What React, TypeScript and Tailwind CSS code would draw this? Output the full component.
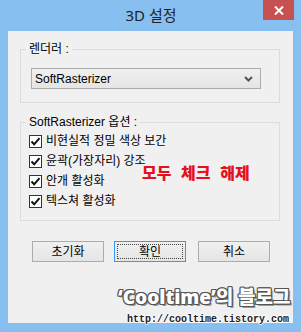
import React from 'react';

const ui = "font-['Liberation_Sans','Noto_Sans_CJK_KR',sans-serif] text-[12px] text-black";

const Check: React.FC<{ label: string }> = ({ label }) => (
  <div className="flex items-center h-[20px]">
    <span className="w-[13px] h-[13px] border border-[#333333] bg-white flex items-center justify-center">
      <svg width="11" height="11" viewBox="0 0 11 11">
        <path d="M1.5 5.5 L4.2 8.3 L9.5 2.2" fill="none" stroke="#111" strokeWidth="2" />
      </svg>
    </span>
    <span className="ml-[4px] leading-none">{label}</span>
  </div>
);

const Btn: React.FC<{ label: string; active?: boolean; className?: string }> = ({ label, active, className }) => (
  <button
    className={`w-[72px] h-[21px] border bg-gradient-to-b from-[#f0f0f0] to-[#e5e5e5] flex items-center justify-center p-[2px] ${
      active ? 'border-[#3399ff]' : 'border-[#acacac]'
    } ${className ?? ''}`}
  >
    <span
      className={`w-full h-full flex items-center justify-center leading-none ${
        active ? 'border border-dotted border-[#444]' : ''
      }`}
    >
      {label}
    </span>
  </button>
);

export default function App() {
  return (
    <div className="relative w-[301px] h-[332px] bg-[#88bff1] overflow-hidden">
      {/* title bar */}
      <div className="relative h-[31px] flex items-center justify-center">
        <span className="text-[15px] text-[#222] font-['Noto_Sans','Noto_Sans_CJK_KR',sans-serif] leading-none pb-[1px] ml-[1px]">
          3D 설정
        </span>
        <div className="absolute right-[7px] top-0 w-[31px] h-[20px] bg-[#c75050] flex items-center justify-center">
          <svg width="10" height="9" viewBox="0 0 10 9">
            <path d="M1 0.5 L9 8.5 M9 0.5 L1 8.5" stroke="#fff" strokeWidth="2" />
          </svg>
        </div>
      </div>

      {/* client */}
      <div className={`mx-[8px] h-[292px] bg-[#f0f0f0] pt-[10px] ${ui}`}>
        <fieldset className="ml-[12px] w-[260px] border border-[#dcdcdc] pl-[5px] pb-[13px]">
          <legend className="px-[3px] leading-[16px]">렌더러 :</legend>
          <div className="mt-[11px] ml-[5px] w-[230px] h-[21px] border border-[#acacac] bg-gradient-to-b from-[#f0f0f0] to-[#e5e5e5] flex items-center justify-between pl-[3px] pr-[7px]">
            <span className="leading-none">SoftRasterizer</span>
            <svg width="9" height="6" viewBox="0 0 9 6">
              <path d="M1 1 L4.5 4.5 L8 1" fill="none" stroke="#555" strokeWidth="2" />
            </svg>
          </div>
        </fieldset>

        <fieldset className="mt-[11px] ml-[12px] w-[260px] border border-[#dcdcdc] pl-[5px] pb-[9px]">
          <legend className="px-[3px] leading-[16px]">SoftRasterizer 옵션 :</legend>
          <div className="mt-[1px] ml-[3px] flex flex-col">
            <Check label="비현실적 정밀 색상 보간" />
            <Check label="윤곽(가장자리) 강조" />
            <Check label="안개 활성화" />
            <Check label="텍스쳐 활성화" />
          </div>
        </fieldset>

        <div className="mt-[20px] ml-[24px] flex">
          <Btn label="초기화" />
          <Btn label="확인" active className="ml-[10px]" />
          <Btn label="취소" className="ml-[12px]" />
        </div>
      </div>

      {/* annotation */}
      <div className="absolute left-[142px] top-[164px] text-[16px] font-black text-[#e5101f] font-['Noto_Sans_CJK_KR',sans-serif] leading-none [word-spacing:6px]">
        모두 체크 해제
      </div>

      {/* watermark */}
      <div className="absolute left-[118px] top-[288px] text-[19px] font-black text-white leading-none font-['Noto_Sans','Noto_Sans_CJK_KR',sans-serif] [text-shadow:1px_0_#555,-1px_0_#555,0_1px_#555,0_-1px_#555,1px_1px_#555,-1px_-1px_#555,1px_-1px_#555,-1px_1px_#555,2px_2px_#999]">
        ‘Cooltime’의 블로그
      </div>
      <div className="absolute left-[127px] top-[315px] text-[10px] font-bold text-[#222] leading-none font-['Liberation_Mono',monospace] [text-shadow:1px_0_#fff,-1px_0_#fff,0_1px_#fff,0_-1px_#fff]">
        http://cooltime.tistory.com
      </div>
    </div>
  );
}
